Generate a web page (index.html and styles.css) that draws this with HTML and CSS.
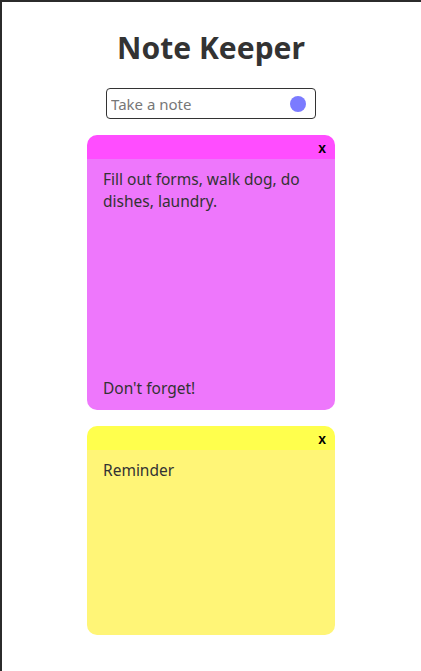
FILE: index.html
```html
<!DOCTYPE html>
<html lang="en">
<head>
<meta charset="utf-8">
<title>Note Keeper</title>
<link rel="stylesheet" href="styles.css">
</head>
<body>
<div class="frame">
  <h1 class="title">Note Keeper</h1>
  <form class="composer">
    <input class="composer-input" type="text" placeholder="Take a note">
    <span class="composer-dot"></span>
  </form>
  <div class="notes">
    <div class="note note-pink note-tall">
      <div class="note-head"><span class="note-close">x</span></div>
      <div class="note-body">
        <p class="note-text">Fill out forms, walk dog, do dishes, laundry.</p>
        <p class="note-text">Don't forget!</p>
      </div>
    </div>
    <div class="note note-yellow">
      <div class="note-head"><span class="note-close">x</span></div>
      <div class="note-body">
        <p class="note-text">Reminder</p>
      </div>
    </div>
  </div>
</div>
</body>
</html>
```

FILE: styles.css
```css
html, body {
  margin: 0;
  padding: 0;
  background: #ffffff;
}
body {
  font-family: "Noto Sans", "Open Sans", sans-serif;
  color: #333333;
}
.frame {
  box-sizing: border-box;
  min-height: 671px;
  border-top: 2px solid #2b2b2b;
  border-left: 2px solid #2b2b2b;
  padding-right: 1px;
  display: flex;
  flex-direction: column;
  align-items: center;
}
.title {
  margin: 26px 0 0;
  font-size: 30px;
  line-height: 40px;
  font-weight: 700;
  color: #333333;
}
.composer {
  margin: 20px 0 0;
  box-sizing: border-box;
  width: 210px;
  height: 31px;
  border: 1px solid #333333;
  border-radius: 4px;
  display: flex;
  align-items: center;
  padding: 0 9px 0 4px;
}
.composer-input {
  flex: 1;
  min-width: 0;
  border: none;
  outline: none;
  padding: 0;
  font-family: inherit;
  font-size: 15px;
  color: #333;
  background: transparent;
}
.composer-input::placeholder {
  color: #777777;
}
.composer-dot {
  width: 16px;
  height: 16px;
  border-radius: 50%;
  background: #7b7bff;
}
.notes {
  margin-top: 16px;
  display: flex;
  flex-direction: column;
  gap: 16px;
}
.note {
  width: 248px;
  border-radius: 10px;
  overflow: hidden;
  display: flex;
  flex-direction: column;
}
.note-tall { height: 275px; }
.note-yellow { height: 209px; }
.note-head {
  height: 24px;
  display: flex;
  justify-content: flex-end;
  align-items: center;
  padding-right: 9px;
}
.note-close {
  font-family: "Liberation Sans", Arial, sans-serif;
  font-weight: 700;
  font-size: 14px;
  color: #000;
  line-height: 1;
  margin-top: 1px;
}
.note-body {
  flex: 1;
  padding: 9px 16px 11px;
  display: flex;
  flex-direction: column;
  justify-content: space-between;
}
.note-text {
  margin: 0;
  font-size: 15.5px;
  line-height: 22px;
  color: #333333;
}
.note-pink .note-head { background: #ff4dff; }
.note-pink .note-body { background: #ee77fc; }
.note-yellow .note-head { background: #ffff4d; }
.note-yellow .note-body { background: #fff577; }
```
